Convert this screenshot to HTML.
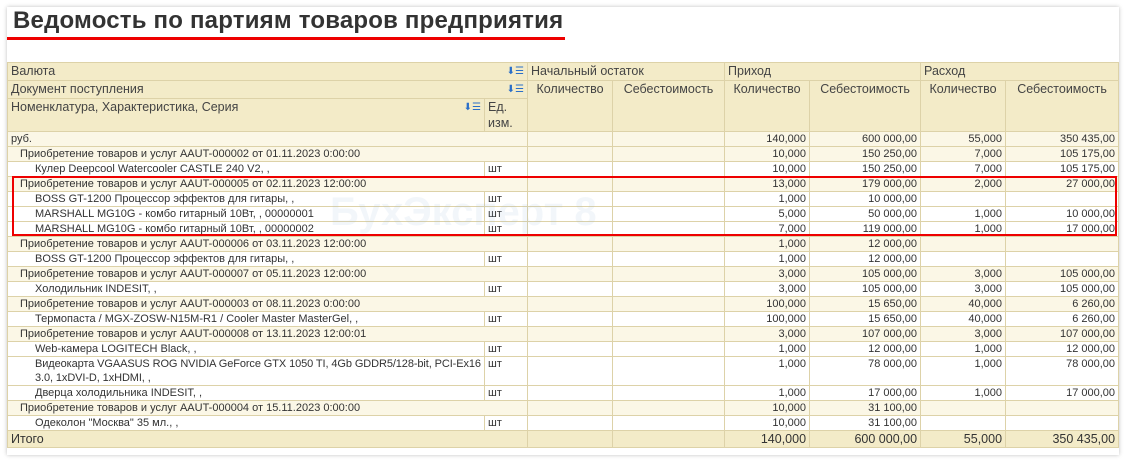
<html><head><style>
body{margin:0;background:#fff;width:1126px;height:463px;overflow:hidden;font-family:"Liberation Sans",Arial,sans-serif;}
.frame{position:absolute;left:7px;top:7px;width:1112px;height:448px;background:#fff;box-shadow:0 0 4px rgba(0,0,0,.25);}
.title{position:absolute;left:13px;top:7px;font-size:24px;font-weight:bold;color:#333;letter-spacing:.2px}
.ul{position:absolute;left:7px;top:37px;width:558px;height:3px;background:#e00}
table{position:absolute;left:7px;top:62px;width:1111px;border-collapse:collapse;table-layout:fixed;font-size:11px;color:#333}
td{border:1px solid #ddd2a8;padding:0 3px;height:14px;line-height:14px;white-space:nowrap;overflow:hidden}
.h td{background:#f3ebc8;font-size:12.5px;height:17px;line-height:17px;color:#444}
.h td.c{text-align:center;vertical-align:top}
.g td{background:#fbf7e6}
.r{text-align:right}
.i1{padding-left:12px}.i2{padding-left:27px}
.tot td{background:#f3ebc8;font-size:12.5px;height:16px;line-height:16px}
.ic{float:right;color:#2a6fc9;font-size:10px}
.box{position:absolute;left:12px;top:176px;width:1105px;height:60px;border:2px solid #e00;box-sizing:border-box}
.wm{position:absolute;left:330px;top:190px;font-size:40px;color:rgba(150,180,210,.12);font-weight:bold}
</style></head><body>
<div class="frame"></div>
<div class="title">Ведомость по партиям товаров предприятия</div>
<div class="ul"></div>
<table>
<colgroup><col style="width:477px"><col style="width:43px"><col style="width:85px"><col style="width:112px"><col style="width:85px"><col style="width:111px"><col style="width:85px"><col style="width:113px"></colgroup>
<tr class="h"><td colspan="2">Валюта<span class="ic">⬇☰</span></td><td colspan="2">Начальный остаток</td><td colspan="2">Приход</td><td colspan="2">Расход</td></tr>
<tr class="h"><td colspan="2">Документ поступления<span class="ic">⬇☰</span></td><td rowspan="2" class="c">Количество</td><td rowspan="2" class="c">Себестоимость</td><td rowspan="2" class="c">Количество</td><td rowspan="2" class="c">Себестоимость</td><td rowspan="2" class="c">Количество</td><td rowspan="2" class="c">Себестоимость</td></tr>
<tr class="h"><td style="vertical-align:top;height:32px">Номенклатура, Характеристика, Серия<span class="ic">⬇☰</span></td><td style="line-height:16px;vertical-align:top">Ед.<br>изм.</td></tr>
<tr class="g"><td colspan="2">руб.</td><td></td><td></td><td class="r">140,000</td><td class="r">600 000,00</td><td class="r">55,000</td><td class="r">350 435,00</td></tr>
<tr class="g"><td colspan="2" class="i1">Приобретение товаров и услуг AAUT-000002 от 01.11.2023 0:00:00</td><td></td><td></td><td class="r">10,000</td><td class="r">150 250,00</td><td class="r">7,000</td><td class="r">105 175,00</td></tr>
<tr><td class="i2">Кулер Deepcool Watercooler CASTLE 240 V2, ,</td><td>шт</td><td></td><td></td><td class="r">10,000</td><td class="r">150 250,00</td><td class="r">7,000</td><td class="r">105 175,00</td></tr>
<tr class="g"><td colspan="2" class="i1">Приобретение товаров и услуг AAUT-000005 от 02.11.2023 12:00:00</td><td></td><td></td><td class="r">13,000</td><td class="r">179 000,00</td><td class="r">2,000</td><td class="r">27 000,00</td></tr>
<tr><td class="i2">BOSS GT-1200 Процессор эффектов для гитары, ,</td><td>шт</td><td></td><td></td><td class="r">1,000</td><td class="r">10 000,00</td><td></td><td></td></tr>
<tr><td class="i2">MARSHALL MG10G - комбо гитарный 10Вт, , 00000001</td><td>шт</td><td></td><td></td><td class="r">5,000</td><td class="r">50 000,00</td><td class="r">1,000</td><td class="r">10 000,00</td></tr>
<tr><td class="i2">MARSHALL MG10G - комбо гитарный 10Вт, , 00000002</td><td>шт</td><td></td><td></td><td class="r">7,000</td><td class="r">119 000,00</td><td class="r">1,000</td><td class="r">17 000,00</td></tr>
<tr class="g"><td colspan="2" class="i1">Приобретение товаров и услуг AAUT-000006 от 03.11.2023 12:00:00</td><td></td><td></td><td class="r">1,000</td><td class="r">12 000,00</td><td></td><td></td></tr>
<tr><td class="i2">BOSS GT-1200 Процессор эффектов для гитары, ,</td><td>шт</td><td></td><td></td><td class="r">1,000</td><td class="r">12 000,00</td><td></td><td></td></tr>
<tr class="g"><td colspan="2" class="i1">Приобретение товаров и услуг AAUT-000007 от 05.11.2023 12:00:00</td><td></td><td></td><td class="r">3,000</td><td class="r">105 000,00</td><td class="r">3,000</td><td class="r">105 000,00</td></tr>
<tr><td class="i2">Холодильник INDESIT, ,</td><td>шт</td><td></td><td></td><td class="r">3,000</td><td class="r">105 000,00</td><td class="r">3,000</td><td class="r">105 000,00</td></tr>
<tr class="g"><td colspan="2" class="i1">Приобретение товаров и услуг AAUT-000003 от 08.11.2023 0:00:00</td><td></td><td></td><td class="r">100,000</td><td class="r">15 650,00</td><td class="r">40,000</td><td class="r">6 260,00</td></tr>
<tr><td class="i2">Термопаста / MGX-ZOSW-N15M-R1 / Cooler Master MasterGel, ,</td><td>шт</td><td></td><td></td><td class="r">100,000</td><td class="r">15 650,00</td><td class="r">40,000</td><td class="r">6 260,00</td></tr>
<tr class="g"><td colspan="2" class="i1">Приобретение товаров и услуг AAUT-000008 от 13.11.2023 12:00:01</td><td></td><td></td><td class="r">3,000</td><td class="r">107 000,00</td><td class="r">3,000</td><td class="r">107 000,00</td></tr>
<tr><td class="i2">Web-камера LOGITECH Black, ,</td><td>шт</td><td></td><td></td><td class="r">1,000</td><td class="r">12 000,00</td><td class="r">1,000</td><td class="r">12 000,00</td></tr>
<tr><td class="i2" style="height:29px;vertical-align:top;letter-spacing:-0.1px">Видеокарта VGAASUS ROG NVIDIA GeForce GTX 1050 TI, 4Gb GDDR5/128-bit, PCI-Ex16<br>3.0, 1xDVI-D, 1xHDMI, ,</td><td style="vertical-align:top">шт</td><td></td><td></td><td class="r" style="vertical-align:top">1,000</td><td class="r" style="vertical-align:top">78 000,00</td><td class="r" style="vertical-align:top">1,000</td><td class="r" style="vertical-align:top">78 000,00</td></tr>
<tr><td class="i2">Дверца холодильника INDESIT, ,</td><td>шт</td><td></td><td></td><td class="r">1,000</td><td class="r">17 000,00</td><td class="r">1,000</td><td class="r">17 000,00</td></tr>
<tr class="g"><td colspan="2" class="i1">Приобретение товаров и услуг AAUT-000004 от 15.11.2023 0:00:00</td><td></td><td></td><td class="r">10,000</td><td class="r">31 100,00</td><td></td><td></td></tr>
<tr><td class="i2">Одеколон "Москва" 35 мл., ,</td><td>шт</td><td></td><td></td><td class="r">10,000</td><td class="r">31 100,00</td><td></td><td></td></tr>
<tr class="tot"><td colspan="2">Итого</td><td></td><td></td><td class="r">140,000</td><td class="r">600 000,00</td><td class="r">55,000</td><td class="r">350 435,00</td></tr>
</table>
<div class="wm">БухЭксперт 8</div>
<div class="box"></div>
</body></html>
